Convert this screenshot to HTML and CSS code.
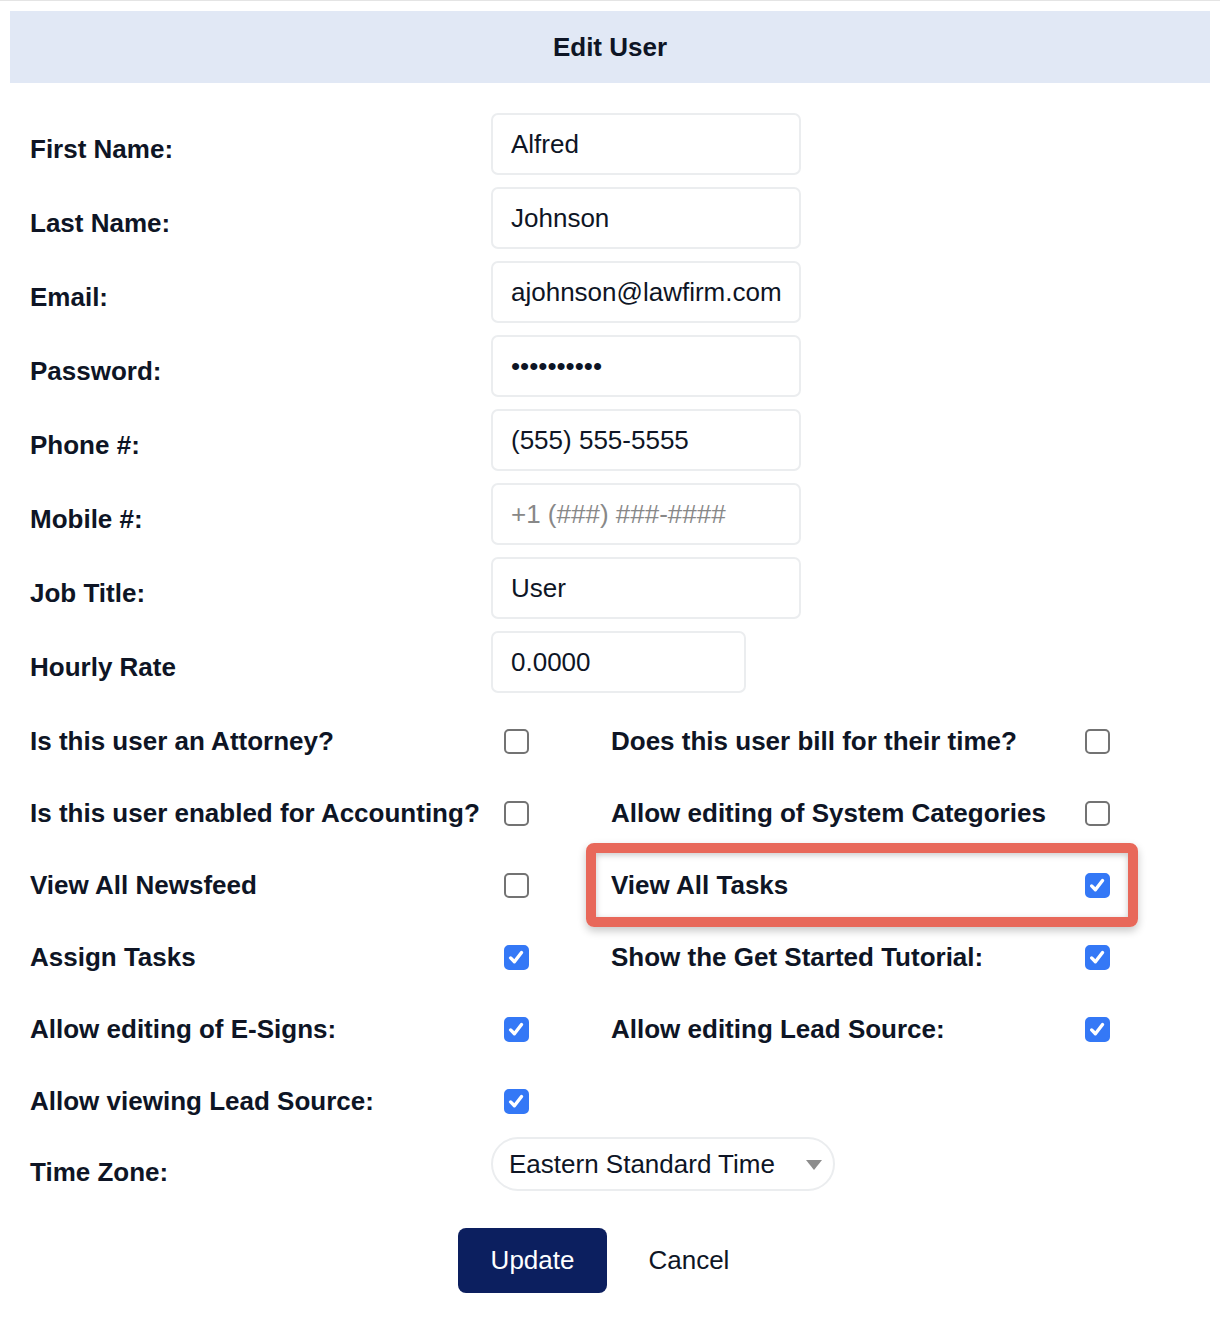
FILE: index.html
```html
<!DOCTYPE html>
<html lang="en">
<head>
    <meta charset="UTF-8">
    <meta name="viewport" content="width=device-width, initial-scale=1.0">
    <title>Edit User</title>
    <link rel="stylesheet" href="styles.css">
</head>
<body>
    <div class="page">
        <div class="header">Edit User</div>
        <form class="user-form" id="editUserForm">
            <div class="field-row">
                <label for="firstName">First Name:</label>
                <input type="text" id="firstName" value="Alfred">
            </div>
            <div class="field-row">
                <label for="lastName">Last Name:</label>
                <input type="text" id="lastName" value="Johnson">
            </div>
            <div class="field-row">
                <label for="email">Email:</label>
                <input type="text" id="email" value="ajohnson@lawfirm.com">
            </div>
            <div class="field-row">
                <label for="password">Password:</label>
                <input type="password" id="password" value="password12">
            </div>
            <div class="field-row">
                <label for="phone">Phone #:</label>
                <input type="text" id="phone" value="(555) 555-5555">
            </div>
            <div class="field-row">
                <label for="mobile">Mobile #:</label>
                <input type="text" id="mobile" placeholder="+1 (###) ###-####">
            </div>
            <div class="field-row">
                <label for="jobTitle">Job Title:</label>
                <input type="text" id="jobTitle" value="User">
            </div>
            <div class="field-row">
                <label for="rate">Hourly Rate</label>
                <input type="text" id="rate" class="short" value="0.0000">
            </div>

            <div class="check-grid">
                <label class="check-item">
                    <span>Is this user an Attorney?</span>
                    <input type="checkbox">
                </label>
                <label class="check-item">
                    <span>Does this user bill for their time?</span>
                    <input type="checkbox">
                </label>
                <label class="check-item">
                    <span>Is this user enabled for Accounting?</span>
                    <input type="checkbox">
                </label>
                <label class="check-item">
                    <span>Allow editing of System Categories</span>
                    <input type="checkbox">
                </label>
                <label class="check-item">
                    <span>View All Newsfeed</span>
                    <input type="checkbox">
                </label>
                <label class="check-item highlighted">
                    <span>View All Tasks</span>
                    <input type="checkbox" checked>
                </label>
                <label class="check-item">
                    <span>Assign Tasks</span>
                    <input type="checkbox" checked>
                </label>
                <label class="check-item">
                    <span>Show the Get Started Tutorial:</span>
                    <input type="checkbox" checked>
                </label>
                <label class="check-item">
                    <span>Allow editing of E-Signs:</span>
                    <input type="checkbox" checked>
                </label>
                <label class="check-item">
                    <span>Allow editing Lead Source:</span>
                    <input type="checkbox" checked>
                </label>
                <label class="check-item">
                    <span>Allow viewing Lead Source:</span>
                    <input type="checkbox" checked>
                </label>
            </div>

            <div class="field-row tz-row">
                <label for="timezone">Time Zone:</label>
                <div class="select-wrap">
                    <select id="timezone">
                        <option>Eastern Standard Time</option>
                        <option>Central Standard Time</option>
                        <option>Mountain Standard Time</option>
                        <option>Pacific Standard Time</option>
                    </select>
                    <svg class="select-arrow" width="16" height="10" viewBox="0 0 16 10">
                        <path d="M0 0 H16 L8 10 Z" fill="#8c8c8c"/>
                    </svg>
                </div>
            </div>

            <div class="actions">
                <button type="submit" class="btn-primary">Update</button>
                <button type="button" class="btn-link">Cancel</button>
            </div>
        </form>
    </div>
</body>
</html>
```

FILE: styles.css
```css
body {
    margin: 0;
    font-family: "Liberation Sans", Arial, Helvetica, sans-serif;
    color: #0e1525;
    background-color: #ffffff;
}

.page {
    border-top: 1px solid #e4e4e4;
    padding: 10px;
}

.header {
    height: 72px;
    display: flex;
    align-items: center;
    justify-content: center;
    background-color: #e1e8f5;
    font-size: 26px;
    font-weight: bold;
}

.user-form {
    padding: 30px 20px 0 20px;
    display: flex;
    flex-direction: column;
}

.field-row {
    display: grid;
    grid-template-columns: 461px 1fr;
    align-items: center;
    margin-bottom: 12px;
}

.field-row label {
    padding-top: 10px;
    font-size: 26px;
    font-weight: bold;
}

.field-row input {
    width: 310px;
    height: 62px;
    padding: 0 18px;
    border: 2px solid #ebedef;
    border-radius: 7px;
    font-family: inherit;
    font-size: 26px;
    color: #0e1525;
    box-sizing: border-box;
    outline: none;
}

.field-row input.short {
    width: 255px;
}

.field-row input::placeholder {
    color: #888888;
}

.check-grid {
    display: grid;
    grid-template-columns: 499px 499px;
    grid-auto-rows: 72px;
    column-gap: 82px;
}

.check-item {
    position: relative;
    display: flex;
    align-items: center;
    justify-content: space-between;
    font-size: 26px;
    font-weight: bold;
    cursor: pointer;
}

.check-item input {
    appearance: none;
    -webkit-appearance: none;
    width: 25px;
    height: 25px;
    margin: 0;
    border: 2px solid #737373;
    border-radius: 5px;
    background-color: #ffffff;
    cursor: pointer;
    flex-shrink: 0;
}

.check-item input:checked {
    border-color: #3478f6;
    background-color: #3478f6;
    background-image: url("data:image/svg+xml;utf8,<svg xmlns='http://www.w3.org/2000/svg' viewBox='0 0 25 25'><path d='M5.5 13 L10 17.5 L18.5 6.5' fill='none' stroke='white' stroke-width='4' stroke-linecap='round' stroke-linejoin='round'/></svg>");
    background-size: 100% 100%;
}

/* annotation box around the changed setting */
.highlighted::after {
    content: "";
    position: absolute;
    top: -6px;
    bottom: -6px;
    left: -25px;
    right: -28px;
    border: 10px solid #e8685a;
    border-radius: 8px;
    box-shadow: 0 4px 8px rgba(0, 0, 0, 0.22), inset 0 2px 6px rgba(0, 0, 0, 0.22);
    pointer-events: none;
}

.tz-row {
    margin-bottom: 0;
}

.tz-row label {
    padding-top: 16px;
}

.select-wrap {
    position: relative;
    width: 344px;
}

.select-wrap select {
    appearance: none;
    -webkit-appearance: none;
    width: 100%;
    height: 54px;
    padding: 0 16px;
    border: 2px solid #ebedef;
    border-radius: 27px;
    background-color: #ffffff;
    font-family: inherit;
    font-size: 26px;
    color: #0e1525;
    outline: none;
    cursor: pointer;
}

.select-arrow {
    position: absolute;
    right: 13px;
    top: 23px;
    pointer-events: none;
}

.actions {
    display: flex;
    justify-content: center;
    gap: 8px;
    margin-top: 37px;
}

.actions button {
    height: 65px;
    padding: 0 33px;
    border: none;
    border-radius: 8px;
    font-family: inherit;
    font-size: 26px;
    cursor: pointer;
}

.btn-primary {
    background-color: #0c1f5f;
    color: #ffffff;
}

.btn-link {
    background-color: transparent;
    color: #0e1525;
}
```
